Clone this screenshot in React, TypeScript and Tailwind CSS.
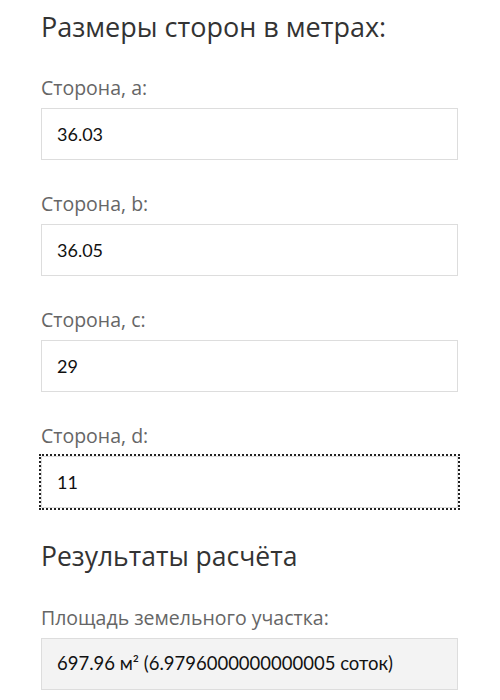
const sides = [
  { label: "Сторона, a:", value: "36.03" },
  { label: "Сторона, b:", value: "36.05" },
  { label: "Сторона, c:", value: "29" },
  { label: "Сторона, d:", value: "11", focused: true },
];

export default function App() {
  return (
    <div className="min-h-screen bg-white px-[41px] pt-[9px] font-['Open_Sans',sans-serif]">
      <h2 className="text-[27px] leading-[36px] text-[#333] font-normal mb-[31px]">
        Размеры сторон в метрах:
      </h2>

      {sides.map((s) => (
        <div key={s.label} className="mb-[32px]">
          <label className="block text-[19.5px] leading-[24px] text-[#666] mb-[8px]">
            {s.label}
          </label>
          <input
            readOnly
            value={s.value}
            className={
              s.focused
                ? "block w-[417px] h-[52px] px-[15px] border border-[#ddd] bg-white text-[18px] text-[#111] font-['Lato',sans-serif] outline-2 outline-dotted outline-[#222] outline-offset-0"
                : "block w-[417px] h-[52px] px-[15px] border border-[#ddd] bg-white text-[18px] text-[#111] font-['Lato',sans-serif] outline-none"
            }
          />
        </div>
      ))}

      <h2 className="text-[26.5px] leading-[32px] text-[#333] font-normal mb-[34px]">
        Результаты расчёта
      </h2>

      <label className="block text-[19.5px] leading-[24px] text-[#666] mb-[8px]">
        Площадь земельного участка:
      </label>
      <div className="w-[417px] h-[52px] px-[15px] flex items-center border border-[#ddd] bg-[#f3f3f3] text-[18.5px] text-[#111] font-['Lato',sans-serif]">
        697.96 м² (6.9796000000000005 соток)
      </div>
    </div>
  );
}
